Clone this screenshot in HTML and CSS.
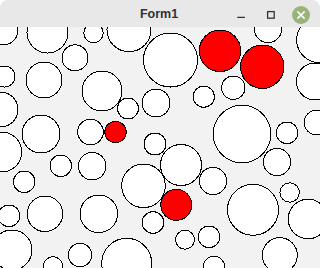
FILE: index.html
```html
<!DOCTYPE html>
<html lang="en">
<head>
    <meta charset="UTF-8">
    <meta name="viewport" content="width=device-width, initial-scale=1.0">
    <title>Form1</title>
    <link rel="stylesheet" href="styles.css">
</head>
<body>
    <div class="window">
        <header class="titlebar">
            <div></div>
            <h1>Form1</h1>
            <div class="controls">
                <span class="btn">
                    <svg width="18" height="18" viewBox="0 0 18 18"><line x1="5.3" y1="11.4" x2="13" y2="11.4" stroke="#2e3436" stroke-width="1.4"/></svg>
                </span>
                <span class="btn">
                    <svg width="18" height="18" viewBox="0 0 18 18"><rect x="5.6" y="5.6" width="6.6" height="6.6" fill="none" stroke="#2e3436" stroke-width="1.3"/></svg>
                </span>
                <span class="btn close">
                    <svg width="18" height="18" viewBox="0 0 18 18"><circle cx="9" cy="9" r="9" fill="#98b47a"/><path d="M5.4 5.4 L12.6 12.6 M12.6 5.4 L5.4 12.6" stroke="#fff" stroke-width="1.5"/></svg>
                </span>
            </div>
        </header>

        <!-- canvas: circles are drawn at their own coordinates -->
        <div class="canvas">
            <svg width="320" height="241" viewBox="0 27 320 241" shape-rendering="crispEdges">
                <g stroke="#000" stroke-width="1" fill="#fff">
                    <circle cx="3" cy="30" r="15"/>
                    <circle cx="47.5" cy="32.5" r="20.5"/>
                    <circle cx="93.5" cy="33" r="9.7"/>
                    <circle cx="129" cy="29.7" r="22"/>
                    <circle cx="75" cy="57.8" r="13"/>
                    <circle cx="4.5" cy="76.5" r="10.5"/>
                    <circle cx="44" cy="80" r="18"/>
                    <circle cx="102" cy="91" r="20"/>
                    <circle cx="128" cy="108.5" r="10.5"/>
                    <circle cx="156" cy="103" r="14"/>
                    <circle cx="170.5" cy="60" r="27"/>
                    <circle cx="0.5" cy="109.5" r="17.5"/>
                    <circle cx="41" cy="134" r="19"/>
                    <circle cx="90.5" cy="132" r="12.8"/>
                    <circle cx="115.5" cy="132" r="10.7" fill="#ff0000"/>
                    <circle cx="1.7" cy="152" r="20"/>
                    <circle cx="155" cy="144" r="11"/>
                    <circle cx="220" cy="50.8" r="20.7" fill="#ff0000"/>
                    <circle cx="262.3" cy="66.7" r="21.7" fill="#ff0000"/>
                    <circle cx="268" cy="29" r="13.7"/>
                    <circle cx="319.4" cy="40" r="22.7"/>
                    <circle cx="315" cy="81.5" r="18.5"/>
                    <circle cx="233.3" cy="87.7" r="11.7"/>
                    <circle cx="203.8" cy="96.7" r="10.6"/>
                    <circle cx="242" cy="134" r="28.8"/>
                    <circle cx="287" cy="132.8" r="10.8"/>
                    <circle cx="316.8" cy="122.5" r="12.5"/>
                    <circle cx="181" cy="165" r="20.5"/>
                    <circle cx="277" cy="162" r="13.7"/>
                    <circle cx="213" cy="181" r="13.7"/>
                    <circle cx="176.3" cy="204.8" r="15.5" fill="#ff0000"/>
                    <circle cx="153" cy="222.5" r="10.8"/>
                    <circle cx="253" cy="209.8" r="25.5"/>
                    <circle cx="289.7" cy="192.5" r="9.7"/>
                    <circle cx="308" cy="219" r="19.8"/>
                    <circle cx="185" cy="239.7" r="9.5"/>
                    <circle cx="209" cy="236.8" r="10.8"/>
                    <circle cx="279.8" cy="255.2" r="17.5"/>
                    <circle cx="214" cy="267" r="10.8"/>
                    <circle cx="60.8" cy="165.8" r="10.8"/>
                    <circle cx="92.2" cy="166.2" r="13.8"/>
                    <circle cx="24.2" cy="181.8" r="10.8"/>
                    <circle cx="143.5" cy="185.8" r="21.8"/>
                    <circle cx="9" cy="215.8" r="10.8"/>
                    <circle cx="45" cy="213.8" r="17.8"/>
                    <circle cx="98.8" cy="213.8" r="18.8"/>
                    <circle cx="12" cy="250" r="20"/>
                    <circle cx="80" cy="255" r="11.7"/>
                    <circle cx="53" cy="266.4" r="9.7"/>
                    <circle cx="126.7" cy="263.3" r="25"/>
                </g>
            </svg>
        </div>
    </div>
</body>
</html>
```

FILE: styles.css
```css
body {
    margin: 0;
    padding: 0;
    background-color: #ffffff;
    font-family: "Liberation Sans", Arial, sans-serif;
}

.window {
    width: 320px;
    height: 268px;
    border-radius: 8px 8px 0 0;
    overflow: hidden;
    background-color: #f2f2f2;
}

.titlebar {
    height: 27px;
    background-color: #e8e8e8;
    display: grid;
    grid-template-columns: 1fr auto 1fr;
    align-items: center;
}

.titlebar h1 {
    margin: 0;
    padding-top: 1px;
    font-size: 12.5px;
    font-weight: bold;
    color: #2e3436;
    margin-right: 2px;
}

.controls {
    display: flex;
    justify-content: flex-end;
    gap: 12px;
    padding-right: 10px;
    padding-top: 2px;
}

.btn {
    display: block;
    width: 18px;
    height: 18px;
}

.btn svg {
    display: block;
}

.canvas {
    height: 241px;
}

.canvas svg {
    display: block;
}
```
